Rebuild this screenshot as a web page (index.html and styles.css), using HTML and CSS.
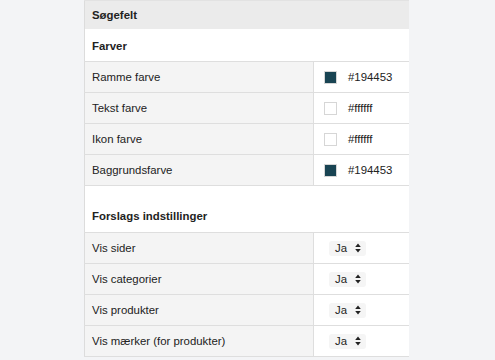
FILE: index.html
```html
<!DOCTYPE html>
<html lang="da">
<head>
  <meta charset="UTF-8" />
  <meta name="viewport" content="width=device-width, initial-scale=1.0" />
  <title>Søgefelt indstillinger</title>
  <link rel="stylesheet" href="styles.css">
</head>
<body>
  <div class="page">
    <table class="settings">
      <tr class="head"><th colspan="2">Søgefelt</th></tr>
      <tr class="section"><th colspan="2">Farver</th></tr>
      <tr>
        <td class="label">Ramme farve</td>
        <td class="value"><span class="swatch dark"></span>#194453</td>
      </tr>
      <tr>
        <td class="label">Tekst farve</td>
        <td class="value"><span class="swatch"></span>#ffffff</td>
      </tr>
      <tr>
        <td class="label">Ikon farve</td>
        <td class="value"><span class="swatch"></span>#ffffff</td>
      </tr>
      <tr>
        <td class="label">Baggrundsfarve</td>
        <td class="value"><span class="swatch dark"></span>#194453</td>
      </tr>
      <tr class="section spaced"><th colspan="2">Forslags indstillinger</th></tr>
      <tr>
        <td class="label">Vis sider</td>
        <td class="value"><span class="select">Ja <svg width="6" height="10" viewBox="0 0 6 10"><path d="M3 0.5L5.8 4H0.2z M3 9.5L5.8 6H0.2z" fill="#222"/></svg></span></td>
      </tr>
      <tr>
        <td class="label">Vis categorier</td>
        <td class="value"><span class="select">Ja <svg width="6" height="10" viewBox="0 0 6 10"><path d="M3 0.5L5.8 4H0.2z M3 9.5L5.8 6H0.2z" fill="#222"/></svg></span></td>
      </tr>
      <tr>
        <td class="label">Vis produkter</td>
        <td class="value"><span class="select">Ja <svg width="6" height="10" viewBox="0 0 6 10"><path d="M3 0.5L5.8 4H0.2z M3 9.5L5.8 6H0.2z" fill="#222"/></svg></span></td>
      </tr>
      <tr>
        <td class="label">Vis mærker (for produkter)</td>
        <td class="value"><span class="select">Ja <svg width="6" height="10" viewBox="0 0 6 10"><path d="M3 0.5L5.8 4H0.2z M3 9.5L5.8 6H0.2z" fill="#222"/></svg></span></td>
      </tr>
    </table>
  </div>
</body>
</html>
```

FILE: styles.css
```css
body {
  margin: 0;
  background: #f3f4f6;
  font-family: "Liberation Sans", Arial, sans-serif;
  font-size: 11.4px;
  color: #222;
}
.page {
  padding-left: 84px;
}
.settings {
  width: 325px;
  border-collapse: collapse;
  background: #fff;
  border-left: 1px solid #dcdcdc;
}
.settings th {
  text-align: left;
  font-weight: bold;
  padding: 0 0 0 7px;
}
.head th {
  background: #ebebeb;
  border-top: 1px solid #e2e2e2;
  height: 28px;
}
.section th {
  height: 31px;
  padding-top: 1px;
}
.settings td {
  height: 30px;
  padding: 0;
  border-top: 1px solid #dedede;
  border-bottom: 1px solid #dedede;
}
.settings .spaced th {
  height: 47px;
  vertical-align: bottom;
  padding-bottom: 10px;
  box-sizing: border-box;
}
.label {
  width: 221px;
  padding-left: 7px !important;
  background: #f4f4f4;
  border-right: 1px solid #dedede;
}
.value {
  white-space: nowrap;
}
.swatch {
  display: inline-block;
  width: 11px;
  height: 11px;
  border: 1px solid #d6d6d6;
  background: #fff;
  vertical-align: -3px;
  margin: 0 11px 0 10px;
}
.swatch.dark {
  background: #194453;
}
.select {
  display: inline-flex;
  align-items: center;
  gap: 8px;
  margin-left: 15px;
  padding: 0 5px 0 6px;
  height: 15px;
  background: #f5f5f5;
  border-radius: 3px;
}
```
